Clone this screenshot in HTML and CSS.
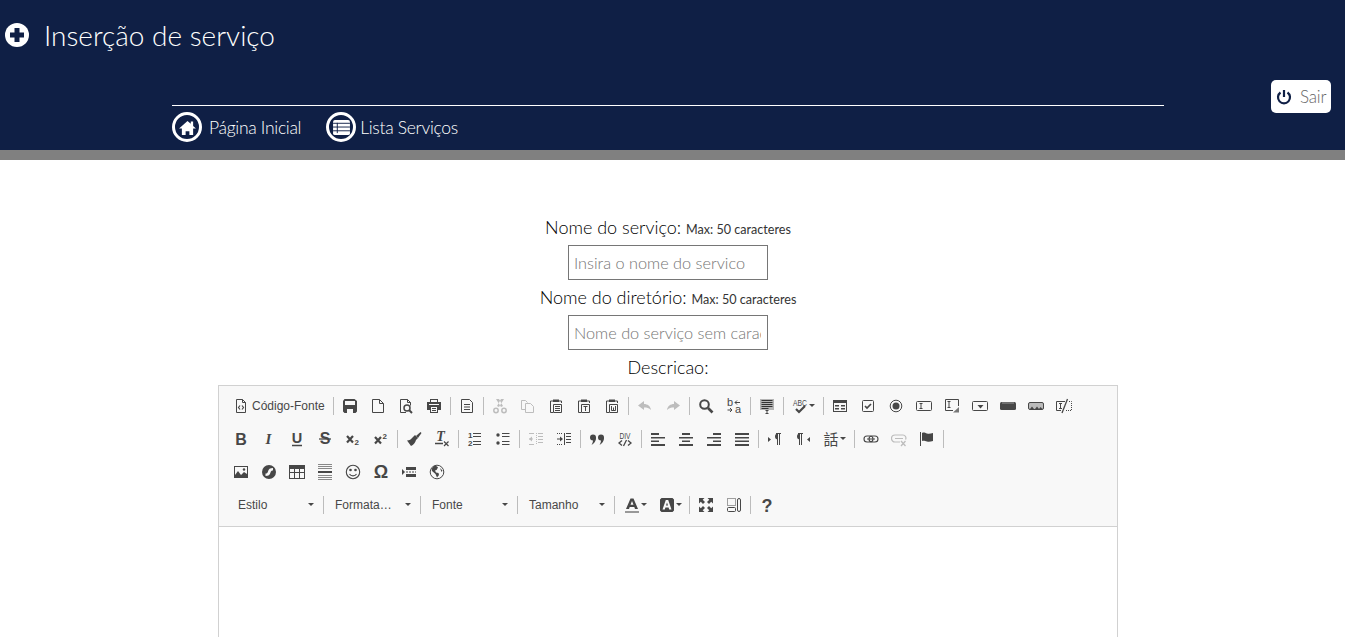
FILE: index.html
```html
<!DOCTYPE html>
<html lang="pt">
<head>
<meta charset="utf-8">
<title>Inserção de serviço</title>
<link rel="stylesheet" href="styles.css">
</head>
<body>
<svg class="sprite" xmlns="http://www.w3.org/2000/svg">
<symbol id="source" viewBox="0 0 16 16"><path d="M3.500 1.500h6l3 3v10h-9zM9.500 1.500v3h3" fill="none" stroke="currentColor"/><path d="M7 7.500 5.500 9.500 7 11.500M9 7.500 10.500 9.500 9 11.500" fill="none" stroke="currentColor" stroke-width="1.200"/></symbol>
<symbol id="save" viewBox="0 0 16 16"><path fill-rule="evenodd" d="M1 3 2.500 1h10L15 3v10.500L13.500 15h-11L1 13.500zM3 3v4h10V3zM5 11v4h6v-4z"/></symbol>
<symbol id="new" viewBox="0 0 16 16"><path d="M2.500 1.500h7l4 4v9h-11zM9.500 1.500v4h4" fill="none" stroke="currentColor"/></symbol>
<symbol id="preview" viewBox="0 0 16 16"><path d="M8 14.500H2.500v-13h7l3 3v3M9.500 1.500v3h3" fill="none" stroke="currentColor"/><circle cx="9" cy="10" r="3" fill="none" stroke="currentColor" stroke-width="1.500"/><path d="m11 12 3 3" stroke="currentColor" stroke-width="2"/></symbol>
<symbol id="print" viewBox="0 0 16 16"><path fill-rule="evenodd" d="M4 1h8v3h3v8h-3v3H4v-3H1V4h3zM5 2v2h6V2zM3 6v1h10V6zM5 9v5h6V9z"/><path d="M6 10.500h4M6 12.500h4" stroke="currentColor"/></symbol>
<symbol id="templates" viewBox="0 0 16 16"><path d="M2.500 1.500h8l3 3v10h-11z" fill="none" stroke="currentColor"/><path d="M5 6.500h6M5 9h6M5 11.500h6" stroke="currentColor"/></symbol>
<symbol id="cut" viewBox="0 0 16 16"><path d="m4 1 5 8 2-1-4-7M12 1 7 9 5 8l4-7"/><circle cx="4" cy="12.500" r="2.200" fill="none" stroke="currentColor" stroke-width="1.500"/><circle cx="12" cy="12.500" r="2.200" fill="none" stroke="currentColor" stroke-width="1.500"/></symbol>
<symbol id="copy" viewBox="0 0 16 16"><path d="M5 11.500H1.500v-9h4l2 2M5.500 5.500h5l3 3v6h-8z" fill="none" stroke="currentColor"/></symbol>
<symbol id="paste" viewBox="0 0 16 16"><path d="M5 3H2.500v11.500H5M11 3h2.500v2" fill="none" stroke="currentColor"/><path d="M5 1.500h6V4H5z"/><path d="M5.500 6.500h8v8h-8z" fill="none" stroke="currentColor"/><path d="M7 8.500h5M7 10.500h5M7 12.500h5" stroke="currentColor"/></symbol>
<symbol id="pastetext" viewBox="0 0 16 16"><path d="M5 3H2.500v11.500H5M11 3h2.500v2" fill="none" stroke="currentColor"/><path d="M5 1.500h6V4H5z"/><path d="M5.500 6.500h8v8h-8z" fill="none" stroke="currentColor"/><path d="M7.500 8.500h4M9.500 8.500v4.500" stroke="currentColor"/></symbol>
<symbol id="pasteword" viewBox="0 0 16 16"><path d="M5 3H2.500v11.500H5M11 3h2.500v2" fill="none" stroke="currentColor"/><path d="M5 1.500h6V4H5z"/><path d="M5.500 6.500h8v8h-8z" fill="none" stroke="currentColor"/><path d="M7.500 8v4.500h4V8M9.500 9.500v3" fill="none" stroke="currentColor"/></symbol>
<symbol id="undo" viewBox="0 0 16 16"><path d="M7 3 1 7.500 7 12V9.500c3 0 5 .5 7 2.500-.5-4-3.500-6-7-6z"/></symbol>
<symbol id="redo" viewBox="0 0 16 16"><path d="M9 3l6 4.500L9 12V9.500c-3 0-5 .5-7 2.500.5-4 3.500-6 7-6z"/></symbol>
<symbol id="find" viewBox="0 0 16 16"><circle cx="6.500" cy="6.500" r="4.300" fill="none" stroke="currentColor" stroke-width="2"/><path d="m10 10 4.500 4.500" stroke="currentColor" stroke-width="2.600"/></symbol>
<symbol id="selectall" viewBox="0 0 16 16"><path d="M1 1h14v11H1z" fill="#b5b5b5"/><path d="M2.500 2.500h11M2.500 4.500h11M2.500 6.500h11M2.500 8.500h11M2.500 10.500h7" stroke="#333"/><path d="M6.500 12.500h3M8 12.500v3M6.500 15.500h3" stroke="currentColor"/></symbol>
<symbol id="form" viewBox="0 0 16 16"><path d="M1 2h14v12H1z"/><path d="M2 5h12v8H2z" fill="#f8f8f8"/><path d="M3 7h4v1.500H3zM3 10h4v1.500H3zM9 7h4v1.500H9zM9 10h4v1.500H9z"/></symbol>
<symbol id="checkbox" viewBox="0 0 16 16"><rect x="2.500" y="2.500" width="11" height="11" rx="1" fill="none" stroke="currentColor"/><path d="m5 8 2 2 4-4" fill="none" stroke="currentColor" stroke-width="1.700"/></symbol>
<symbol id="radio" viewBox="0 0 16 16"><circle cx="8" cy="8" r="5.800" fill="none" stroke="currentColor"/><circle cx="8" cy="8" r="3.500"/></symbol>
<symbol id="textfield" viewBox="0 0 16 16"><rect x=".5" y="3.500" width="15" height="9" rx="1" fill="none" stroke="currentColor"/><path d="M3.500 5.500h3M5 5.500v5M3.500 10.500h3" stroke="currentColor" fill="none"/></symbol>
<symbol id="textarea" viewBox="0 0 16 16"><path d="M9 12.500H1.500v-11h13V8" fill="none" stroke="currentColor"/><path d="M3.500 3.500h3M5 3.500v6M3.500 9.500h3" stroke="currentColor" fill="none"/><path d="M15 9v5.500H9z" fill="#777"/></symbol>
<symbol id="select" viewBox="0 0 16 16"><rect x=".5" y="3.500" width="15" height="9" rx="1" fill="none" stroke="currentColor"/><path d="M8 7h6l-3 3.500z" transform="translate(-2.500)"/></symbol>
<symbol id="button" viewBox="0 0 16 16"><rect y="4" width="16" height="8" rx="1.500"/><path d="M2 5h12" stroke="#999"/></symbol>
<symbol id="imagebutton" viewBox="0 0 16 16"><rect x=".5" y="4.500" width="15" height="7" rx="1.500" fill="#bbb" stroke="currentColor"/><path d="m2 11 2-2.500L6 11zM7 11l2-2.500 2 2.500zM11 11l1.500-2 2 2z"/></symbol>
<symbol id="hiddenfield" viewBox="0 0 16 16"><path d="M9 3.500H.5v9H5" fill="none" stroke="currentColor"/><path d="M3 5.500h3M4.500 5.500v5M3 10.500h3" stroke="currentColor" fill="none"/><path d="M11.500 1 6 15" stroke="currentColor" stroke-width="1.300"/><path d="M13 3.500h2.500v9H9" fill="none" stroke="currentColor" stroke-dasharray="1 1"/></symbol>
<symbol id="brush" viewBox="0 0 16 16"><path d="m9 4 3 3-2 2c-.5 2-2.500 5-5 6L1 9.500c2.500 0 4-1 6-3.500z"/><path d="m10 5 4.500-4 1 1L12 7z"/></symbol>
<symbol id="ul" viewBox="0 0 16 16"><circle cx="3" cy="4" r="1.700"/><circle cx="3" cy="12" r="1.700"/><path d="M7 2.500h7.500M7 5.500h7.500M7 10.500h7.500M7 13.500h7.500" stroke="currentColor"/></symbol>
<symbol id="outdent" viewBox="0 0 16 16"><path d="M8.500 2v12" stroke="currentColor" stroke-dasharray="1 1"/><path d="M10 2.500h5M10 5.500h5M10 8.500h5M10 11.500h5M1 2.500h5M1 13.500h5M1 8h4" stroke="currentColor"/><path d="M1 8l3-2.500v5z"/></symbol>
<symbol id="indent" viewBox="0 0 16 16"><path d="M8.500 2v12" stroke="currentColor"/><path d="M10 2.500h5M10 5.500h5M10 8.500h5M10 11.500h5" stroke="currentColor"/><path d="M1 2.500h5M1 13.500h5" stroke="currentColor" stroke-dasharray="1 1"/><path d="M1 8h3" stroke="currentColor"/><path d="M7 8 4 5.500v5z"/></symbol>
<symbol id="blockquote" viewBox="0 0 16 16"><circle cx="4" cy="6.500" r="3"/><path d="M7 6.500c0 4-2 6-4.500 7.500 1-2 1.500-3 1.500-5z"/><circle cx="12" cy="6.500" r="3"/><path d="M15 6.500c0 4-2 6-4.500 7.500 1-2 1.500-3 1.500-5z"/></symbol>
<symbol id="left" viewBox="0 0 16 16"><path d="M1 2h8v2H1zM1 6h14v1.500H1zM1 9.500h8V11H1zM1 13h14v2H1z"/></symbol>
<symbol id="center" viewBox="0 0 16 16"><path d="M4 2h8v2H4zM1 6h14v1.500H1zM4 9.500h8V11H4zM1 13h14v2H1z"/></symbol>
<symbol id="right" viewBox="0 0 16 16"><path d="M7 2h8v2H7zM1 6h14v1.500H1zM7 9.500h8V11H7zM1 13h14v2H1z"/></symbol>
<symbol id="justify" viewBox="0 0 16 16"><path d="M1 2h14v2H1zM1 6h14v1.500H1zM1 9.500h14V11H1zM1 13h14v2H1z"/></symbol>
<symbol id="ltr" viewBox="0 0 16 16"><path d="M1 6l3 2.500L1 11z"/><path d="M9 2.500h5M10.500 2.500V14M12.500 2.500V14" stroke="currentColor" fill="none"/><path d="M11 2.500a3 3 0 0 0 0 6z"/></symbol>
<symbol id="rtl" viewBox="0 0 16 16"><path d="M15 6l-3 2.500 3 2.500z"/><path d="M3 2.500h5M4.500 2.500V14M6.500 2.500V14" stroke="currentColor" fill="none"/><path d="M5 2.500a3 3 0 0 0 0 6z"/></symbol>
<symbol id="link" viewBox="0 0 16 16"><rect x="1" y="5" width="9" height="6" rx="3" fill="none" stroke="currentColor" stroke-width="1.100"/><rect x="6" y="5" width="9" height="6" rx="3" fill="none" stroke="currentColor" stroke-width="1.100"/><path d="M4 8h8" stroke="currentColor"/></symbol>
<symbol id="unlink" viewBox="0 0 16 16"><path d="M9 11H4a3 3 0 0 1 0-7h8a3 3 0 0 1 2.500 4.500M4 7.500h8" fill="none" stroke="currentColor" stroke-width="1.200"/><path d="m10 10 4.500 5M14.500 10 10 15" stroke="currentColor" stroke-width="1.300"/></symbol>
<symbol id="anchor" viewBox="0 0 16 16"><path d="M1.500 1v14" stroke="currentColor"/><path d="M3 2c2-1 3 0 5 .5s4 0 6-.5v8c-2 .5-4 1-6 .5s-3-1-5-.5z"/></symbol>
<symbol id="image" viewBox="0 0 16 16"><path d="M1 2h14v12H1z"/><path d="M2 3h12v7l-3-2-3 3-3-4-3 4z" fill="#f8f8f8"/><circle cx="11" cy="5.500" r="1.200"/></symbol>
<symbol id="flash" viewBox="0 0 16 16"><path fill-rule="evenodd" d="M8 1a7 7 0 1 0 0 14A7 7 0 0 0 8 1zm4 3v2.500c-1.500 0-2 .5-2.500 2C9 11 7.500 12 4.500 12V9.500c1.500 0 2-.5 2.500-2C7.500 5 9 4 12 4z"/></symbol>
<symbol id="table" viewBox="0 0 16 16"><path fill-rule="evenodd" d="M0 1h16v14H0zM1 5v3h4V5zm5 0v3h4V5zm5 0v3h4V5zM1 9v5h4V9zm5 0v5h4V9zm5 0v5h4V9z"/></symbol>
<symbol id="hr" viewBox="0 0 16 16"><path d="M1 .5h14M1 2.500h14M1 4.500h14M1 11.500h14M1 13.500h14M1 15.500h14" stroke="#888"/><path d="M1 7h14v2H1z"/></symbol>
<symbol id="smiley" viewBox="0 0 16 16"><circle cx="8" cy="8" r="6.700" fill="none" stroke="currentColor" stroke-width="1.100"/><circle cx="5.500" cy="6" r="1.300"/><circle cx="10.500" cy="6" r="1.300"/><path d="M4.500 10c1.500 2.500 5.500 2.500 7 0" fill="none" stroke="currentColor" stroke-width="1.100"/></symbol>
<symbol id="pagebreak" viewBox="0 0 16 16"><path d="M1 5l3 3-3 3z"/><path d="M5 3h10v3H5zM5 10h10v3H5z"/><path d="M5 8h10" stroke="currentColor" stroke-dasharray="2 1"/></symbol>
<symbol id="iframe" viewBox="0 0 16 16"><circle cx="8" cy="8" r="6.800" fill="none" stroke="currentColor"/><path d="M5 2c2-.5 3 .5 4 1.500L7.500 6 6 6.500l1 2 2.500.5.500 2-2 2.500L6.500 10 3 7 2.500 5zM11 4l2.500 2.500-1 1.500z"/></symbol>
<symbol id="textcolor" viewBox="0 0 16 16"><path d="M6.500 1.500h3L14 12h-3l-.7-2H5.700L5 12H2zM6.500 7.800h3L8 4z" fill-rule="evenodd"/><path d="M1 14h14v2H1z" fill="#999"/></symbol>
<symbol id="bgcolor" viewBox="0 0 16 16"><path fill-rule="evenodd" d="M2.500 1h11L15 2.500v11L13.500 15h-11L1 13.500v-11zM6.800 3 3.500 12.500h2.300l.6-2h3.200l.6 2h2.300L9.200 3zM7 8.500h2L8 5.500z"/></symbol>
<symbol id="maximize" viewBox="0 0 16 16"><path d="M1 1h5.500L4.700 2.800 7 5 5 7 2.800 4.700 1 6.500zM15 1v5.500l-1.800-1.800L11 7 9 5l2.300-2.200L9.500 1zM1 15V9.500l1.800 1.800L5 9l2 2-2.300 2.200L6.500 15zM15 15H9.500l1.800-1.800L9 11l2-2 2.200 2.300L15 9.500z"/></symbol>
<symbol id="blocks" viewBox="0 0 16 16"><path d="M1.500 1.500h8v7h-8z" fill="none" stroke="currentColor" stroke-dasharray="1 1"/><rect x="1.500" y="10.500" width="8" height="4" rx="1" fill="none" stroke="currentColor"/><rect x="11.500" y="1.500" width="3" height="13" rx="1.500" fill="none" stroke="currentColor"/></symbol>
</svg>

<header class="topbar">
  <div class="title-row">
    <svg class="plus-icon" viewBox="0 0 24 24"><circle cx="12" cy="12" r="12" fill="#fff"/><path d="M9.500 5h5v4.500H19v5h-4.500V19h-5v-4.500H5v-5h4.500z" fill="#0f1f45"/></svg>
    <h1 class="title">Inserção de serviço</h1>
  </div>
  <div class="nav-row">
    <nav class="nav">
      <a class="nav-link">
        <span class="nav-circle"><svg viewBox="0 0 18 16"><path d="M9 1 0 9h3v7h4v-4h4v4h4V9h3l-3-2.700V1.500h-2.500v2.600z" fill="#fff"/></svg></span>
        <span class="nav-text">Página Inicial</span>
      </a>
      <a class="nav-link list-link">
        <span class="nav-circle"><svg viewBox="0 0 18 16"><rect width="18" height="16" rx="2" fill="#fff"/><path d="M0 3.500h18M0 7.500h18M0 11.500h18M4.500 3v11" stroke="#0f1f45" fill="none"/></svg></span>
        <span class="nav-text">Lista Serviços</span>
      </a>
    </nav>
    <a class="logout">
      <svg viewBox="0 0 16 16"><path d="M8 1v7" stroke="#0f1f45" stroke-width="2.200" fill="none"/><path d="M4.500 3.500a6 6 0 1 0 7 0" stroke="#0f1f45" stroke-width="2.200" fill="none"/></svg>
      <span>Sair</span>
    </a>
  </div>
</header>

<main class="content">
  <label class="field-label">Nome do serviço: <small>Max: 50 caracteres</small></label>
  <input class="field-input" type="text" placeholder="Insira o nome do servico">
  <label class="field-label">Nome do diretório: <small>Max: 50 caracteres</small></label>
  <input class="field-input" type="text" placeholder="Nome do serviço sem caracteres">
  <label class="field-label">Descricao:</label>

  <section class="editor">
    <div class="toolbar">
      <div class="tb-row">
        <a class="btn btn-source"><svg class="ico"><use href="#source"/></svg><span>Código-Fonte</span></a>
        <i class="sep"></i>
        <a class="btn"><svg class="ico"><use href="#save"/></svg></a>
        <a class="btn"><svg class="ico"><use href="#new"/></svg></a>
        <a class="btn"><svg class="ico"><use href="#preview"/></svg></a>
        <a class="btn"><svg class="ico"><use href="#print"/></svg></a>
        <i class="sep"></i>
        <a class="btn"><svg class="ico"><use href="#templates"/></svg></a>
        <i class="sep"></i>
        <a class="btn off"><svg class="ico"><use href="#cut"/></svg></a>
        <a class="btn off"><svg class="ico"><use href="#copy"/></svg></a>
        <a class="btn"><svg class="ico"><use href="#paste"/></svg></a>
        <a class="btn"><svg class="ico"><use href="#pastetext"/></svg></a>
        <a class="btn"><svg class="ico"><use href="#pasteword"/></svg></a>
        <i class="sep"></i>
        <a class="btn off"><svg class="ico"><use href="#undo"/></svg></a>
        <a class="btn off"><svg class="ico"><use href="#redo"/></svg></a>
        <i class="sep"></i>
        <a class="btn"><svg class="ico"><use href="#find"/></svg></a>
        <a class="btn"><svg class="ico" viewBox="0 0 16 16"><text x="1" y="8" class="t-replace">b</text><text x="9" y="15" class="t-replace">a</text><path d="M9 4.500h5M9 4.500l2-2M9 4.500l2 2M1.500 12H6M6 12l-2-2M6 12l-2 2" fill="none" stroke="currentColor"/></svg></a>
        <i class="sep"></i>
        <a class="btn"><svg class="ico"><use href="#selectall"/></svg></a>
        <i class="sep"></i>
        <a class="btn btn-drop"><svg class="ico" viewBox="0 0 16 16"><text x="1" y="8" class="t-abc" textLength="14" lengthAdjust="spacingAndGlyphs">ABC</text><path d="m4 11 3 3 6-6" fill="none" stroke="currentColor" stroke-width="2.200"/></svg><b class="arrow"></b></a>
        <i class="sep"></i>
        <a class="btn"><svg class="ico"><use href="#form"/></svg></a>
        <a class="btn"><svg class="ico"><use href="#checkbox"/></svg></a>
        <a class="btn"><svg class="ico"><use href="#radio"/></svg></a>
        <a class="btn"><svg class="ico"><use href="#textfield"/></svg></a>
        <a class="btn"><svg class="ico"><use href="#textarea"/></svg></a>
        <a class="btn"><svg class="ico"><use href="#select"/></svg></a>
        <a class="btn"><svg class="ico"><use href="#button"/></svg></a>
        <a class="btn"><svg class="ico"><use href="#imagebutton"/></svg></a>
        <a class="btn"><svg class="ico"><use href="#hiddenfield"/></svg></a>
      </div>
      <div class="tb-row">
        <a class="btn"><svg class="ico" viewBox="0 0 16 16"><text x="8" y="13.500" class="t-b">B</text></svg></a>
        <a class="btn"><svg class="ico" viewBox="0 0 16 16"><text x="7.500" y="13" class="t-i">I</text></svg></a>
        <a class="btn"><svg class="ico" viewBox="0 0 16 16"><text x="8" y="11.500" class="t-u">U</text><path d="M3 14.500h10" stroke="currentColor" stroke-width="1.500"/></svg></a>
        <a class="btn"><svg class="ico" viewBox="0 0 16 16"><text x="8" y="13" class="t-s">S</text><path d="M2 8h12" stroke="currentColor" stroke-width="1.300"/></svg></a>
        <a class="btn"><svg class="ico" viewBox="0 0 16 16"><path d="m2 5 6 6.500M8 5l-6 6.500" stroke="currentColor" stroke-width="2.200"/><text x="9.500" y="14" class="t-n">2</text></svg></a>
        <a class="btn"><svg class="ico" viewBox="0 0 16 16"><path d="m2 6 6 6.500M8 6l-6 6.500" stroke="currentColor" stroke-width="2.200"/><text x="9.500" y="7.500" class="t-n">2</text></svg></a>
        <i class="sep"></i>
        <a class="btn"><svg class="ico"><use href="#brush"/></svg></a>
        <a class="btn"><svg class="ico" viewBox="0 0 16 16"><text x="6.500" y="10" class="t-t">T</text><path d="M1 12.500h8" stroke="currentColor" stroke-width="1.500"/><path d="m10 10.500 4.500 4.500M14.500 10.500 10 15" stroke="currentColor" stroke-width="1.200"/></svg></a>
        <i class="sep"></i>
        <a class="btn"><svg class="ico" viewBox="0 0 16 16"><text x="1" y="6.500" class="t-n">1</text><text x="1" y="14.500" class="t-n">2</text><path d="M6 2.500h8M6 5.500h8M6 10.500h8M6 13.500h8" stroke="currentColor"/></svg></a>
        <a class="btn"><svg class="ico"><use href="#ul"/></svg></a>
        <i class="sep"></i>
        <a class="btn off"><svg class="ico"><use href="#outdent"/></svg></a>
        <a class="btn"><svg class="ico"><use href="#indent"/></svg></a>
        <i class="sep"></i>
        <a class="btn"><svg class="ico"><use href="#blockquote"/></svg></a>
        <a class="btn"><svg class="ico" viewBox="0 0 16 16"><text x="2.500" y="8" class="t-div" textLength="11" lengthAdjust="spacingAndGlyphs">DIV</text><path d="M5 9.500 2 12l3 2.500M11 9.500l3 2.500-3 2.500M9.500 9 6.500 15" fill="none" stroke="currentColor" stroke-width="1.300"/></svg></a>
        <i class="sep"></i>
        <a class="btn"><svg class="ico"><use href="#left"/></svg></a>
        <a class="btn"><svg class="ico"><use href="#center"/></svg></a>
        <a class="btn"><svg class="ico"><use href="#right"/></svg></a>
        <a class="btn"><svg class="ico"><use href="#justify"/></svg></a>
        <i class="sep"></i>
        <a class="btn"><svg class="ico"><use href="#ltr"/></svg></a>
        <a class="btn"><svg class="ico"><use href="#rtl"/></svg></a>
        <a class="btn btn-drop"><svg class="ico" viewBox="0 0 16 16"><text x="8" y="14" class="t-lang">話</text></svg><b class="arrow"></b></a>
        <i class="sep"></i>
        <a class="btn"><svg class="ico"><use href="#link"/></svg></a>
        <a class="btn off"><svg class="ico"><use href="#unlink"/></svg></a>
        <a class="btn"><svg class="ico"><use href="#anchor"/></svg></a>
        <i class="sep"></i>
      </div>
      <div class="tb-row">
        <a class="btn"><svg class="ico"><use href="#image"/></svg></a>
        <a class="btn"><svg class="ico"><use href="#flash"/></svg></a>
        <a class="btn"><svg class="ico"><use href="#table"/></svg></a>
        <a class="btn"><svg class="ico"><use href="#hr"/></svg></a>
        <a class="btn"><svg class="ico"><use href="#smiley"/></svg></a>
        <a class="btn"><svg class="ico" viewBox="0 0 16 16"><text x="8" y="14" class="t-om">Ω</text></svg></a>
        <a class="btn"><svg class="ico"><use href="#pagebreak"/></svg></a>
        <a class="btn"><svg class="ico"><use href="#iframe"/></svg></a>
      </div>
      <div class="tb-row tb-row-combos">
        <a class="combo"><span>Estilo</span><b class="arrow"></b></a>
        <i class="sep"></i>
        <a class="combo"><span>Formata…</span><b class="arrow"></b></a>
        <i class="sep"></i>
        <a class="combo"><span>Fonte</span><b class="arrow"></b></a>
        <i class="sep"></i>
        <a class="combo"><span>Tamanho</span><b class="arrow"></b></a>
        <i class="sep"></i>
        <a class="btn btn-color"><svg class="ico"><use href="#textcolor"/></svg><b class="arrow"></b></a>
        <a class="btn btn-color"><svg class="ico"><use href="#bgcolor"/></svg><b class="arrow"></b></a>
        <i class="sep"></i>
        <a class="btn"><svg class="ico"><use href="#maximize"/></svg></a>
        <a class="btn"><svg class="ico"><use href="#blocks"/></svg></a>
        <i class="sep"></i>
        <a class="btn"><svg class="ico" viewBox="0 0 16 16"><text x="8" y="14.500" class="t-q">?</text></svg></a>
      </div>
    </div>
    <div class="editor-body"></div>
  </section>
</main>
</body>
</html>
```
FILE: styles.css
```css
html { overflow: hidden; }
* { box-sizing: border-box; }
body { margin: 0; background: #fff; font-family: Lato, sans-serif; color: #333; }
.sprite { display: block; width: 0; height: 0; }

.topbar { height: 160px; background: #0f1f45; border-bottom: 10px solid #808080; color: #fff; }
.title-row { display: flex; align-items: center; height: 80px; padding: 0 0 10px 5px; }
.plus-icon { width: 24px; height: 24px; flex: none; }
.title { margin: 0 0 0 15px; font-size: 28px; font-weight: 300; line-height: 40px; }
.nav-row { display: flex; align-items: flex-start; padding-left: 172px; }
.nav { display: flex; width: 992px; margin-top: 25px; padding-top: 6px; border-top: 1px solid #fff; }
.nav-link { display: flex; align-items: center; height: 30px; }
.nav-circle { display: flex; align-items: center; justify-content: center; width: 30px; height: 30px; border: 3px solid #fff; border-radius: 50%; }
.nav-circle svg { width: 17px; height: 15px; }
.nav-text { margin-left: 7px; font-size: 17.500px; letter-spacing: -.3px; font-weight: 300; }
.list-link { margin-left: 25px; }
.list-link .nav-text { margin-left: 4px; }
.logout { display: flex; align-items: center; width: 60px; height: 33px; margin-left: auto; margin-right: 14px; padding-left: 5px; background: #fff; border-radius: 5px; color: #666; font-size: 17px; letter-spacing: -.2px; font-weight: 300; }
.logout svg { width: 16px; height: 16px; margin-right: 8px; flex: none; }

.content { display: flex; flex-direction: column; align-items: center; padding: 50px 9px 0 0; }
.field-label { height: 35px; font-size: 18px; line-height: 35px; font-weight: 300; color: #000; }
.field-label small { font-size: 12.600px; font-weight: 400; color: #333; }
.field-input { width: 200px; height: 35px; padding: 0 6px 0 5px; border: 1px solid #767676; background: #fff; font: 300 16.300px Lato, sans-serif; color: #333; outline: none; }
.field-input::placeholder { color: #757575; opacity: 1; }

.editor { width: 900px; border: 1px solid #d1d1d1; }
.toolbar { height: 141px; padding: 3px 0 5px 8px; background: #f8f8f8; border-bottom: 1px solid #d1d1d1; font-family: "Liberation Sans", Arial, sans-serif; color: #474747; }
.tb-row { display: flex; align-items: center; height: 33px; }
.tb-row-combos { padding-left: 2px; }
.btn { display: flex; align-items: center; flex: none; width: 28px; height: 28px; padding-left: 6px; color: #474747; }
.btn.off { color: #bdbdbd; }
.ico { display: block; width: 16px; height: 16px; flex: none; fill: currentColor; overflow: visible; }
.btn-source { width: 104px; }
.btn-source span { margin-left: 3px; font-size: 12px; white-space: nowrap; }
.btn-drop { width: 35px; }
.btn-color { width: 35px; padding-left: 7px; }
.sep { display: block; flex: none; width: 1px; height: 18px; margin: 0 2px; background: #bcbcbc; }
.arrow { display: block; flex: none; width: 0; height: 0; margin-left: 1px; border: solid transparent; border-width: 3px 3px 0; border-top-color: #474747; }
.combo { display: flex; align-items: center; justify-content: space-between; flex: none; width: 92px; height: 28px; padding: 0 7px 0 9px; font-size: 12px; color: #484848; }
.combo .arrow { margin-left: 0; }
.editor-body { height: 400px; background: #fff; }

.t-replace { font: 400 11px "Liberation Sans", sans-serif; }
.t-abc { font: 400 9.500px "Liberation Sans", sans-serif; }
.t-b { font: 700 16px "Liberation Sans", sans-serif; text-anchor: middle; }
.t-i { font: italic 700 15px "Liberation Serif", serif; text-anchor: middle; }
.t-u { font: 700 14.500px "Liberation Sans", sans-serif; text-anchor: middle; }
.t-s { font: 700 16px "Liberation Sans", sans-serif; text-anchor: middle; }
.t-n { font: 700 8px "Liberation Sans", sans-serif; }
.t-t { font: italic 700 14px "Liberation Serif", serif; text-anchor: middle; }
.t-div { font: 400 9.500px "Liberation Sans", sans-serif; }
.t-lang { font: 400 15px "Noto Sans CJK TC", sans-serif; text-anchor: middle; }
.t-om { font: 700 18px "Liberation Sans", sans-serif; text-anchor: middle; }
.t-q { font: 700 18px "Liberation Sans", sans-serif; text-anchor: middle; }
```
